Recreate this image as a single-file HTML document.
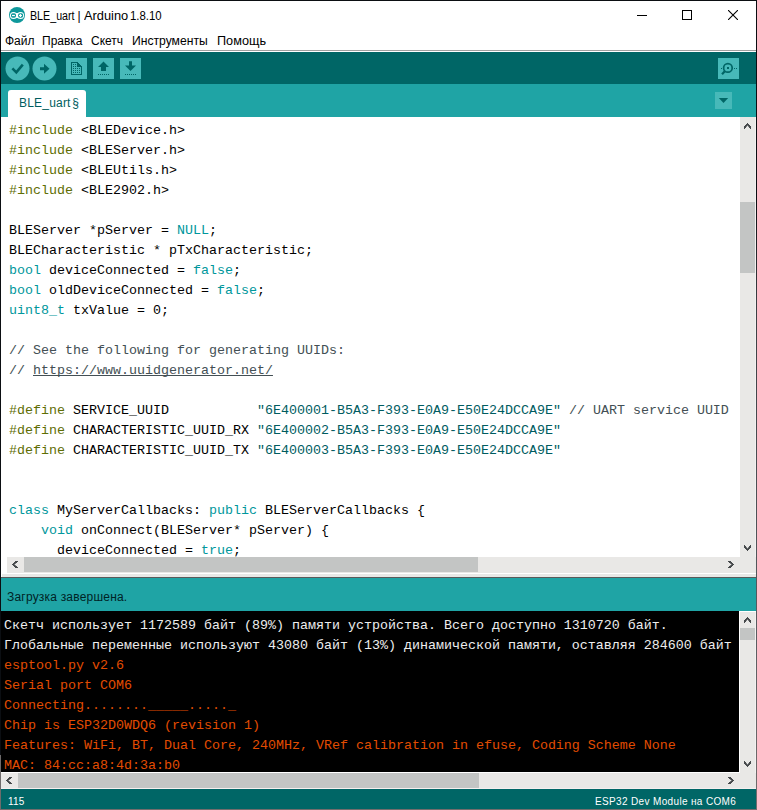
<!DOCTYPE html>
<html><head><meta charset="utf-8">
<style>
*{margin:0;padding:0;box-sizing:border-box}
html,body{width:757px;height:810px;overflow:hidden;background:#fff}
body{position:relative;font-family:"Liberation Sans",sans-serif}
.a{position:absolute}
.mono{font-family:"Liberation Mono",monospace;font-size:13.333px;line-height:20px;white-space:pre}
.ln{position:absolute;left:9px;height:20px}
.pp{color:#5E6D03}
.kw{color:#00979C}
.cm{color:#434F54}
.st{color:#005C5F}
.con{position:absolute;left:4px;height:20px;color:#EEEEEE}
.err{color:#E34C00}
u{text-decoration-skip-ink:none}
</style></head><body>
<!-- borders -->
<div class="a" style="left:0;top:0;width:757px;height:1px;background:#0B0E12;z-index:5"></div>
<div class="a" style="left:0;top:0;width:1px;height:810px;background:linear-gradient(#0B0E12 0,#0B0E12 755px,#6E6B6B 755px);z-index:5"></div>
<div class="a" style="left:756px;top:0;width:1px;height:810px;background:linear-gradient(#0B0E12 0,#0B0E12 200px,#3A3E42 300px,#555A5E 600px,#736D6D 810px);z-index:5"></div>

<!-- title bar -->
<svg class="a" style="left:9px;top:7px" width="16" height="16" viewBox="0 0 16 16">
<circle cx="8" cy="8" r="8" fill="#0E989B"/>
<circle cx="4.5" cy="8.45" r="3.55" fill="#fff"/><circle cx="11.5" cy="8.45" r="3.55" fill="#fff"/>
<rect x="7" y="6" width="2" height="5" fill="#fff"/>
<rect x="2" y="6.2" width="5" height="4.5" rx="1.7" fill="#0E989B"/><rect x="9.1" y="6.2" width="5" height="4.5" rx="1.7" fill="#0E989B"/>
<rect x="3" y="7.9" width="2.9" height="1.2" fill="#fff"/>
<rect x="10" y="7.9" width="2.9" height="1.2" fill="#fff"/><rect x="10.85" y="7.1" width="1.2" height="2.9" fill="#fff"/>
</svg>
<div class="a" style="left:0;top:8px;font-size:12px;line-height:16px;color:#000;white-space:pre"><span class="a" style="left:30.3px;top:0;transform:scaleX(0.89);transform-origin:0 0">BLE_uart</span><span class="a" style="left:77.5px;top:0">|</span><span class="a" style="left:83.5px;top:0;transform:scaleX(1.07);transform-origin:0 0">Arduino</span><span class="a" style="left:129.5px;top:0;transform:scaleX(0.95);transform-origin:0 0">1.8.10</span></div>
<!-- window controls -->
<div class="a" style="left:637px;top:15px;width:10px;height:1px;background:#000"></div>
<div class="a" style="left:682px;top:10px;width:10px;height:10px;border:1px solid #000"></div>
<svg class="a" style="left:728px;top:10px" width="10" height="10" viewBox="0 0 10 10"><path d="M0 0L10 10M10 0L0 10" stroke="#000" stroke-width="1.1"/></svg>

<!-- menu -->
<div class="a" style="left:0;top:33px;font-size:12px;line-height:16px;color:#000;white-space:pre"><span class="a" style="left:5px;top:0">Файл</span><span class="a" style="left:42px;top:0">Правка</span><span class="a" style="left:91px;top:0">Скетч</span><span class="a" style="left:132px;top:0;transform:scaleX(1.012);transform-origin:0 0">Инструменты</span><span class="a" style="left:217px;top:0;transform:scaleX(1.057);transform-origin:0 0">Помощь</span></div>
<div class="a" style="left:0;top:50px;width:757px;height:1px;background:#a0a0a0"></div>
<div class="a" style="left:0;top:51px;width:757px;height:1px;background:#fff"></div>

<!-- toolbar -->
<div class="a" style="left:0;top:52px;width:757px;height:32px;background:#006666"></div>
<svg class="a" style="left:0;top:52px" width="160" height="32" viewBox="0 0 160 32">
 <circle cx="17.5" cy="16.5" r="12" fill="#47B9B9"/>
 <path d="M12.4 16.4L16.3 20.3 22.8 12.6" stroke="#006666" stroke-width="2.6" fill="none"/>
 <circle cx="44.5" cy="16.5" r="12" fill="#47B9B9"/>
 <path d="M40 15.3h4v-3.5l5.5 5-5.5 5v-3.5h-4z" fill="#006666"/>
 <rect x="66" y="6" width="21" height="21" fill="#47B9B9"/>
 <g fill="#006666" shape-rendering="crispEdges">
 <rect x="71" y="10" width="6" height="1"/><rect x="71" y="10" width="1" height="13"/><rect x="71" y="22" width="11" height="1"/><rect x="81" y="14" width="1" height="9"/>
 <path d="M76.5 10h1l4.5 4.5v0.5h-5.5z"/>
 <rect x="73" y="12" width="1" height="1"/><rect x="75" y="12" width="1" height="1"/><rect x="73" y="14" width="1" height="1"/><rect x="75" y="14" width="1" height="1"/><rect x="73" y="16" width="1" height="1"/><rect x="75" y="16" width="1" height="1"/><rect x="77" y="16" width="1" height="1"/><rect x="79" y="16" width="1" height="1"/><rect x="73" y="18" width="1" height="1"/><rect x="75" y="18" width="1" height="1"/><rect x="77" y="18" width="1" height="1"/><rect x="79" y="18" width="1" height="1"/><rect x="73" y="20" width="1" height="1"/><rect x="75" y="20" width="1" height="1"/><rect x="77" y="20" width="1" height="1"/><rect x="79" y="20" width="1" height="1"/>
 </g>
 <rect x="93" y="6" width="21" height="21" fill="#47B9B9"/>
 <path d="M98 15l5.5-5.5 5.5 5.5h-3v4h-5v-4z" fill="#006666"/>
 <g fill="#006666" shape-rendering="crispEdges"><rect x="98" y="22" width="1" height="1"/><rect x="100" y="22" width="1" height="1"/><rect x="102" y="22" width="1" height="1"/><rect x="104" y="22" width="1" height="1"/><rect x="106" y="22" width="1" height="1"/><rect x="108" y="22" width="1" height="1"/></g>
 <rect x="120" y="6" width="21" height="21" fill="#47B9B9"/>
 <path d="M129 9.3h3v4.2h4l-5.5 5.5-5.5-5.5h4z" fill="#006666"/>
 <g fill="#006666" shape-rendering="crispEdges"><rect x="125" y="22" width="1" height="1"/><rect x="127" y="22" width="1" height="1"/><rect x="129" y="22" width="1" height="1"/><rect x="131" y="22" width="1" height="1"/><rect x="133" y="22" width="1" height="1"/><rect x="135" y="22" width="1" height="1"/></g>
</svg>
<svg class="a" style="left:718px;top:58px" width="21" height="21" viewBox="0 0 21 21">
<rect width="21" height="21" fill="#47B9B9"/>
<circle cx="9.9" cy="9.9" r="4.3" fill="none" stroke="#006666" stroke-width="1.7"/>
<rect x="9" y="9" width="2" height="2" fill="#006666"/>
<path d="M6.8 13.2L4 16.2" stroke="#006666" stroke-width="2.2"/>
<g fill="#006666"><rect x="3" y="10" width="1" height="1"/><rect x="16" y="10" width="1" height="1"/><rect x="18" y="10" width="1" height="1"/></g>
</svg>

<!-- tabs -->
<div class="a" style="left:0;top:84px;width:757px;height:33px;background:#1FA4A5"></div>
<div class="a" style="left:8px;top:90px;width:78px;height:27px;background:#fff;border-radius:3px 3px 0 0"></div>
<div class="a" style="left:19px;top:95px;font-size:12px;line-height:16px;color:#005E60;letter-spacing:0.2px">BLE_uart</div><div class="a" style="left:72.3px;top:95px;font-size:12px;line-height:16px;color:#005E60">§</div>
<div class="a" style="left:715px;top:92px;width:17px;height:17px;background:#47B9B9"></div>
<svg class="a" style="left:718px;top:98px" width="12" height="6"><path d="M0.8 0h9.4l-4.7 5z" fill="#006666"/></svg>

<!-- editor -->
<div class="a mono" style="left:0;top:117px;width:740px;height:440px;overflow:hidden">
<div class="ln" style="top:4px"><span class="pp">#include</span> &lt;BLEDevice.h&gt;</div>
<div class="ln" style="top:24px"><span class="pp">#include</span> &lt;BLEServer.h&gt;</div>
<div class="ln" style="top:44px"><span class="pp">#include</span> &lt;BLEUtils.h&gt;</div>
<div class="ln" style="top:64px"><span class="pp">#include</span> &lt;BLE2902.h&gt;</div>
<div class="ln" style="top:104px">BLEServer *pServer = <span class="kw">NULL</span>;</div>
<div class="ln" style="top:124px">BLECharacteristic * pTxCharacteristic;</div>
<div class="ln" style="top:144px"><span class="kw">bool</span> deviceConnected = <span class="kw">false</span>;</div>
<div class="ln" style="top:164px"><span class="kw">bool</span> oldDeviceConnected = <span class="kw">false</span>;</div>
<div class="ln" style="top:184px"><span class="kw">uint8_t</span> txValue = 0;</div>
<div class="ln cm" style="top:224px">// See the following for generating UUIDs:</div>
<div class="ln cm" style="top:244px">// <u>https://www.uuidgenerator.net/</u></div>
<div class="ln" style="top:284px"><span class="pp">#define</span> SERVICE_UUID           <span class="st">"6E400001-B5A3-F393-E0A9-E50E24DCCA9E"</span> <span class="cm">// UART service UUID</span></div>
<div class="ln" style="top:304px"><span class="pp">#define</span> CHARACTERISTIC_UUID_RX <span class="st">"6E400002-B5A3-F393-E0A9-E50E24DCCA9E"</span></div>
<div class="ln" style="top:324px"><span class="pp">#define</span> CHARACTERISTIC_UUID_TX <span class="st">"6E400003-B5A3-F393-E0A9-E50E24DCCA9E"</span></div>
<div class="ln" style="top:384px"><span class="kw">class</span> MyServerCallbacks: <span class="kw">public</span> BLEServerCallbacks {</div>
<div class="ln" style="top:404px">    <span class="kw">void</span> onConnect(BLEServer* pServer) {</div>
<div class="ln" style="top:424px">      deviceConnected = <span class="kw">true</span>;</div>
</div>
<!-- editor v scrollbar -->
<div class="a" style="left:740px;top:117px;width:16px;height:440px;background:#E9E8E6"></div>
<div class="a" style="left:740px;top:202px;width:15px;height:71px;background:#C3C5C4"></div>
<!-- editor h scrollbar -->
<div class="a" style="left:7px;top:557px;width:749px;height:16px;background:#E9E8E6"></div>
<div class="a" style="left:24px;top:557px;width:454px;height:15px;background:#C3C5C4"></div>
<div class="a" style="left:1px;top:573px;width:755px;height:1px;background:#fff"></div>
<div class="a" style="left:2px;top:574px;width:754px;height:3px;background:#E8E8E6"></div>
<div class="a" style="left:1px;top:577px;width:755px;height:1px;background:#5A5A5A"></div>

<!-- status -->
<div class="a" style="left:0;top:578px;width:757px;height:33px;background:#1FA4A5"></div>
<div class="a" style="left:7px;top:589px;font-size:12px;line-height:16px;color:#002325;letter-spacing:0.2px">Загрузка завершена.</div>

<!-- console -->
<div class="a mono" style="left:0;top:611px;width:739px;height:161px;background:#000;overflow:hidden">
<div class="con" style="top:5px">Скетч использует 1172589 байт (89%) памяти устройства. Всего доступно 1310720 байт.</div>
<div class="con" style="top:25px">Глобальные переменные используют 43080 байт (13%) динамической памяти, оставляя 284600 байт для локальных переменных. Максимум: 327680 байт.</div>
<div class="con err" style="top:45px">esptool.py v2.6</div>
<div class="con err" style="top:65px">Serial port COM6</div>
<div class="con err" style="top:85px">Connecting........_____....._</div>
<div class="con err" style="top:105px">Chip is ESP32D0WDQ6 (revision 1)</div>
<div class="con err" style="top:125px">Features: WiFi, BT, Dual Core, 240MHz, VRef calibration in efuse, Coding Scheme None</div>
<div class="con err" style="top:145px">MAC: 84:cc:a8:4d:3a:b0</div>
</div>
<!-- console v scrollbar -->
<div class="a" style="left:739px;top:611px;width:17px;height:161px;background:#fff"></div>
<div class="a" style="left:740px;top:612px;width:16px;height:161px;background:#E9E8E6"></div>
<div class="a" style="left:740px;top:628px;width:15px;height:12px;background:#C3C5C4"></div>
<!-- console h scrollbar -->
<div class="a" style="left:0;top:772px;width:740px;height:1px;background:#fff"></div>
<div class="a" style="left:0;top:773px;width:757px;height:15px;background:#E9E8E6"></div><div class="a" style="left:0;top:788px;width:757px;height:1px;background:#F5EFEF"></div>
<div class="a" style="left:18px;top:773px;width:461px;height:15px;background:#C3C5C4"></div>

<div class="a" style="left:755px;top:117px;width:1px;height:440px;background:#F2F1F0"></div>
<div class="a" style="left:755px;top:612px;width:1px;height:161px;background:#F2F1F0"></div>
<!-- chevrons -->
<svg class="a" style="left:741px;top:119px" width="14" height="14" shape-rendering="crispEdges"><g fill="#46494B"><rect x="6" y="4" width="1" height="1"/><rect x="5" y="5" width="1" height="1"/><rect x="6" y="5" width="1" height="1"/><rect x="7" y="5" width="1" height="1"/><rect x="4" y="6" width="1" height="1"/><rect x="5" y="6" width="1" height="1"/><rect x="7" y="6" width="1" height="1"/><rect x="8" y="6" width="1" height="1"/><rect x="3" y="7" width="1" height="1"/><rect x="4" y="7" width="1" height="1"/><rect x="8" y="7" width="1" height="1"/><rect x="9" y="7" width="1" height="1"/><rect x="3" y="8" width="1" height="1"/><rect x="4" y="8" width="1" height="1"/><rect x="8" y="8" width="1" height="1"/><rect x="9" y="8" width="1" height="1"/><rect x="3" y="9" width="1" height="1"/><rect x="9" y="9" width="1" height="1"/></g><g fill="#75777A"><rect x="5" y="7" width="1" height="1"/><rect x="7" y="7" width="1" height="1"/><rect x="6" y="6" width="1" height="1"/></g></svg>
<svg class="a" style="left:741px;top:540px" width="14" height="14" shape-rendering="crispEdges"><g fill="#46494B"><rect x="6" y="10" width="1" height="1"/><rect x="5" y="9" width="1" height="1"/><rect x="6" y="9" width="1" height="1"/><rect x="7" y="9" width="1" height="1"/><rect x="4" y="8" width="1" height="1"/><rect x="5" y="8" width="1" height="1"/><rect x="7" y="8" width="1" height="1"/><rect x="8" y="8" width="1" height="1"/><rect x="3" y="7" width="1" height="1"/><rect x="4" y="7" width="1" height="1"/><rect x="8" y="7" width="1" height="1"/><rect x="9" y="7" width="1" height="1"/><rect x="3" y="6" width="1" height="1"/><rect x="4" y="6" width="1" height="1"/><rect x="8" y="6" width="1" height="1"/><rect x="9" y="6" width="1" height="1"/><rect x="3" y="5" width="1" height="1"/><rect x="9" y="5" width="1" height="1"/></g><g fill="#75777A"><rect x="5" y="7" width="1" height="1"/><rect x="7" y="7" width="1" height="1"/><rect x="6" y="8" width="1" height="1"/></g></svg>
<svg class="a" style="left:8px;top:558px" width="14" height="14" shape-rendering="crispEdges"><g fill="#46494B"><rect x="4" y="6" width="1" height="1"/><rect x="5" y="5" width="1" height="1"/><rect x="5" y="6" width="1" height="1"/><rect x="5" y="7" width="1" height="1"/><rect x="6" y="4" width="1" height="1"/><rect x="6" y="5" width="1" height="1"/><rect x="6" y="7" width="1" height="1"/><rect x="6" y="8" width="1" height="1"/><rect x="7" y="3" width="1" height="1"/><rect x="7" y="4" width="1" height="1"/><rect x="7" y="8" width="1" height="1"/><rect x="7" y="9" width="1" height="1"/><rect x="8" y="3" width="1" height="1"/><rect x="8" y="4" width="1" height="1"/><rect x="8" y="8" width="1" height="1"/><rect x="8" y="9" width="1" height="1"/><rect x="9" y="3" width="1" height="1"/><rect x="9" y="9" width="1" height="1"/></g><g fill="#75777A"><rect x="7" y="5" width="1" height="1"/><rect x="7" y="7" width="1" height="1"/><rect x="6" y="6" width="1" height="1"/></g></svg>
<svg class="a" style="left:723px;top:558px" width="14" height="14" shape-rendering="crispEdges"><g fill="#46494B"><rect x="10" y="6" width="1" height="1"/><rect x="9" y="5" width="1" height="1"/><rect x="9" y="6" width="1" height="1"/><rect x="9" y="7" width="1" height="1"/><rect x="8" y="4" width="1" height="1"/><rect x="8" y="5" width="1" height="1"/><rect x="8" y="7" width="1" height="1"/><rect x="8" y="8" width="1" height="1"/><rect x="7" y="3" width="1" height="1"/><rect x="7" y="4" width="1" height="1"/><rect x="7" y="8" width="1" height="1"/><rect x="7" y="9" width="1" height="1"/><rect x="6" y="3" width="1" height="1"/><rect x="6" y="4" width="1" height="1"/><rect x="6" y="8" width="1" height="1"/><rect x="6" y="9" width="1" height="1"/><rect x="5" y="3" width="1" height="1"/><rect x="5" y="9" width="1" height="1"/></g><g fill="#75777A"><rect x="7" y="5" width="1" height="1"/><rect x="7" y="7" width="1" height="1"/><rect x="8" y="6" width="1" height="1"/></g></svg>
<svg class="a" style="left:741px;top:613px" width="14" height="14" shape-rendering="crispEdges"><g fill="#46494B"><rect x="6" y="4" width="1" height="1"/><rect x="5" y="5" width="1" height="1"/><rect x="6" y="5" width="1" height="1"/><rect x="7" y="5" width="1" height="1"/><rect x="4" y="6" width="1" height="1"/><rect x="5" y="6" width="1" height="1"/><rect x="7" y="6" width="1" height="1"/><rect x="8" y="6" width="1" height="1"/><rect x="3" y="7" width="1" height="1"/><rect x="4" y="7" width="1" height="1"/><rect x="8" y="7" width="1" height="1"/><rect x="9" y="7" width="1" height="1"/><rect x="3" y="8" width="1" height="1"/><rect x="4" y="8" width="1" height="1"/><rect x="8" y="8" width="1" height="1"/><rect x="9" y="8" width="1" height="1"/><rect x="3" y="9" width="1" height="1"/><rect x="9" y="9" width="1" height="1"/></g><g fill="#75777A"><rect x="5" y="7" width="1" height="1"/><rect x="7" y="7" width="1" height="1"/><rect x="6" y="6" width="1" height="1"/></g></svg>
<svg class="a" style="left:741px;top:756px" width="14" height="14" shape-rendering="crispEdges"><g fill="#46494B"><rect x="6" y="10" width="1" height="1"/><rect x="5" y="9" width="1" height="1"/><rect x="6" y="9" width="1" height="1"/><rect x="7" y="9" width="1" height="1"/><rect x="4" y="8" width="1" height="1"/><rect x="5" y="8" width="1" height="1"/><rect x="7" y="8" width="1" height="1"/><rect x="8" y="8" width="1" height="1"/><rect x="3" y="7" width="1" height="1"/><rect x="4" y="7" width="1" height="1"/><rect x="8" y="7" width="1" height="1"/><rect x="9" y="7" width="1" height="1"/><rect x="3" y="6" width="1" height="1"/><rect x="4" y="6" width="1" height="1"/><rect x="8" y="6" width="1" height="1"/><rect x="9" y="6" width="1" height="1"/><rect x="3" y="5" width="1" height="1"/><rect x="9" y="5" width="1" height="1"/></g><g fill="#75777A"><rect x="5" y="7" width="1" height="1"/><rect x="7" y="7" width="1" height="1"/><rect x="6" y="8" width="1" height="1"/></g></svg>
<svg class="a" style="left:2px;top:774px" width="14" height="14" shape-rendering="crispEdges"><g fill="#46494B"><rect x="4" y="6" width="1" height="1"/><rect x="5" y="5" width="1" height="1"/><rect x="5" y="6" width="1" height="1"/><rect x="5" y="7" width="1" height="1"/><rect x="6" y="4" width="1" height="1"/><rect x="6" y="5" width="1" height="1"/><rect x="6" y="7" width="1" height="1"/><rect x="6" y="8" width="1" height="1"/><rect x="7" y="3" width="1" height="1"/><rect x="7" y="4" width="1" height="1"/><rect x="7" y="8" width="1" height="1"/><rect x="7" y="9" width="1" height="1"/><rect x="8" y="3" width="1" height="1"/><rect x="8" y="4" width="1" height="1"/><rect x="8" y="8" width="1" height="1"/><rect x="8" y="9" width="1" height="1"/><rect x="9" y="3" width="1" height="1"/><rect x="9" y="9" width="1" height="1"/></g><g fill="#75777A"><rect x="7" y="5" width="1" height="1"/><rect x="7" y="7" width="1" height="1"/><rect x="6" y="6" width="1" height="1"/></g></svg>
<svg class="a" style="left:723px;top:774px" width="14" height="14" shape-rendering="crispEdges"><g fill="#46494B"><rect x="10" y="6" width="1" height="1"/><rect x="9" y="5" width="1" height="1"/><rect x="9" y="6" width="1" height="1"/><rect x="9" y="7" width="1" height="1"/><rect x="8" y="4" width="1" height="1"/><rect x="8" y="5" width="1" height="1"/><rect x="8" y="7" width="1" height="1"/><rect x="8" y="8" width="1" height="1"/><rect x="7" y="3" width="1" height="1"/><rect x="7" y="4" width="1" height="1"/><rect x="7" y="8" width="1" height="1"/><rect x="7" y="9" width="1" height="1"/><rect x="6" y="3" width="1" height="1"/><rect x="6" y="4" width="1" height="1"/><rect x="6" y="8" width="1" height="1"/><rect x="6" y="9" width="1" height="1"/><rect x="5" y="3" width="1" height="1"/><rect x="5" y="9" width="1" height="1"/></g><g fill="#75777A"><rect x="7" y="5" width="1" height="1"/><rect x="7" y="7" width="1" height="1"/><rect x="8" y="6" width="1" height="1"/></g></svg>
<!-- line status -->
<div class="a" style="left:0;top:789px;width:757px;height:20px;background:#006666"></div>
<div class="a" style="left:0;top:809px;width:757px;height:1px;background:#736D6D;z-index:5"></div>
<div class="a" style="left:8px;top:796px;font-size:10px;line-height:12px;color:#fff;letter-spacing:0.2px">115</div>
<div class="a" style="left:595px;top:796px;font-size:10px;line-height:12px;color:#fff;letter-spacing:0.35px">ESP32 Dev Module на COM6</div>
</body></html>
